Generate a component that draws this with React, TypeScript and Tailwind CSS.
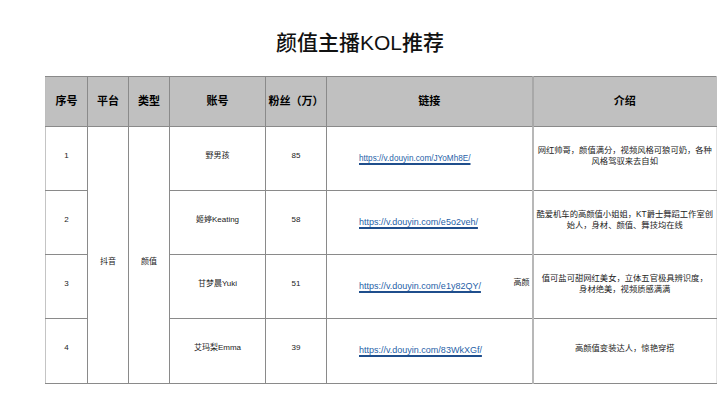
export default function App() {
  const rows = [
    {
      no: '1',
      name: '野男孩',
      fans: '85',
      link: 'https://v.douyin.com/JYoMh8E/',
      small: true,
      intro: ['网红帅哥，颜值满分，视频风格可狼可奶，各种', '风格驾驭来去自如'],
    },
    {
      no: '2',
      name: '姬婷Keating',
      fans: '58',
      link: 'https://v.douyin.com/e5o2veh/',
      intro: ['酷爱机车的高颜值小姐姐，KT爵士舞蹈工作室创', '始人，身材、颜值、舞技均在线'],
    },
    {
      no: '3',
      name: '甘梦晨Yuki',
      fans: '51',
      link: 'https://v.douyin.com/e1y82QY/',
      overflow: '高颜',
      intro: ['值可盐可甜网红美女，立体五官极具辨识度，', '身材绝美，视频质感满满'],
    },
    {
      no: '4',
      name: '艾玛梨Emma',
      fans: '39',
      link: 'https://v.douyin.com/83WkXGf/',
      intro: ['高颜值变装达人，惊艳穿搭'],
    },
  ];

  const head = 'bg-[#c0c0c0] border border-[#8a8a8a] text-[11px] font-bold text-black text-center align-middle';
  const base = 'border border-[#8a8a8a] text-[#222] align-middle';
  const cell = `${base} text-[8px] text-center`;

  return (
    <div className="w-[720px] h-[405px] overflow-hidden bg-white font-['Liberation_Sans','Noto_Sans_CJK_SC',sans-serif]">
      <h1 className="pt-[29px] h-[76px] text-center text-[21px] leading-[28px] font-medium text-[#111]">
        颜值主播KOL推荐
      </h1>

      <table className="ml-[45px] w-[671px] table-fixed border-collapse">
        <colgroup>
          <col className="w-[42px]" />
          <col className="w-[41px]" />
          <col className="w-[41px]" />
          <col className="w-[96px]" />
          <col className="w-[61px]" />
          <col className="w-[206px]" />
          <col className="w-[184px]" />
        </colgroup>
        <thead>
          <tr className="h-[50px]">
            <th className={`${head} border-l-[#bdbdbd]`}>序号</th>
            <th className={head}>平台</th>
            <th className={head}>类型</th>
            <th className={head}>账号</th>
            <th className={head}>粉丝（万）</th>
            <th className={`${head} border-r-2 border-r-[#a8a8a8]`}>链接</th>
            <th className={`${head} border-r-[#c0c0c0]`}>介绍</th>
          </tr>
        </thead>
        <tbody>
          {rows.map((r, i) => (
            <tr key={r.no} className={i === 3 ? 'h-[65px]' : 'h-[64px]'}>
              <td className={`${cell} border-l-[#c4c4c4] pb-[6px]`}>{r.no}</td>
              {i === 0 && (
                <>
                  <td rowSpan={4} className={`${cell} pt-[14px]`}>抖音</td>
                  <td rowSpan={4} className={`${cell} pt-[14px]`}>颜值</td>
                </>
              )}
              <td className={`${cell} pb-[6px]`}>{r.name}</td>
              <td className={`${cell} pb-[6px]`}>{r.fans}</td>
              <td className={`${base} relative border-r-2 border-r-[#b8b8b8] pb-[6px] text-left pl-[32px]`}>
                <span
                  className={`whitespace-nowrap text-[#1f5fa8] underline decoration-[#1f4e8c] decoration-[1.5px] underline-offset-[2px] ${
                    r.small ? 'text-[8.2px]' : 'text-[9px]'
                  }`}
                >
                  {r.link}
                </span>
                {r.overflow && (
                  <span className="absolute right-[2px] top-[22px] text-[8px] text-[#222]">{r.overflow}</span>
                )}
              </td>
              <td className={`${base} border-r-[#e4e4e4] pb-[6px] text-center text-[8.3px] leading-[11px]`}>
                {r.intro.map((line) => (
                  <div key={line} className="whitespace-nowrap">
                    {line}
                  </div>
                ))}
              </td>
            </tr>
          ))}
        </tbody>
      </table>
    </div>
  );
}
